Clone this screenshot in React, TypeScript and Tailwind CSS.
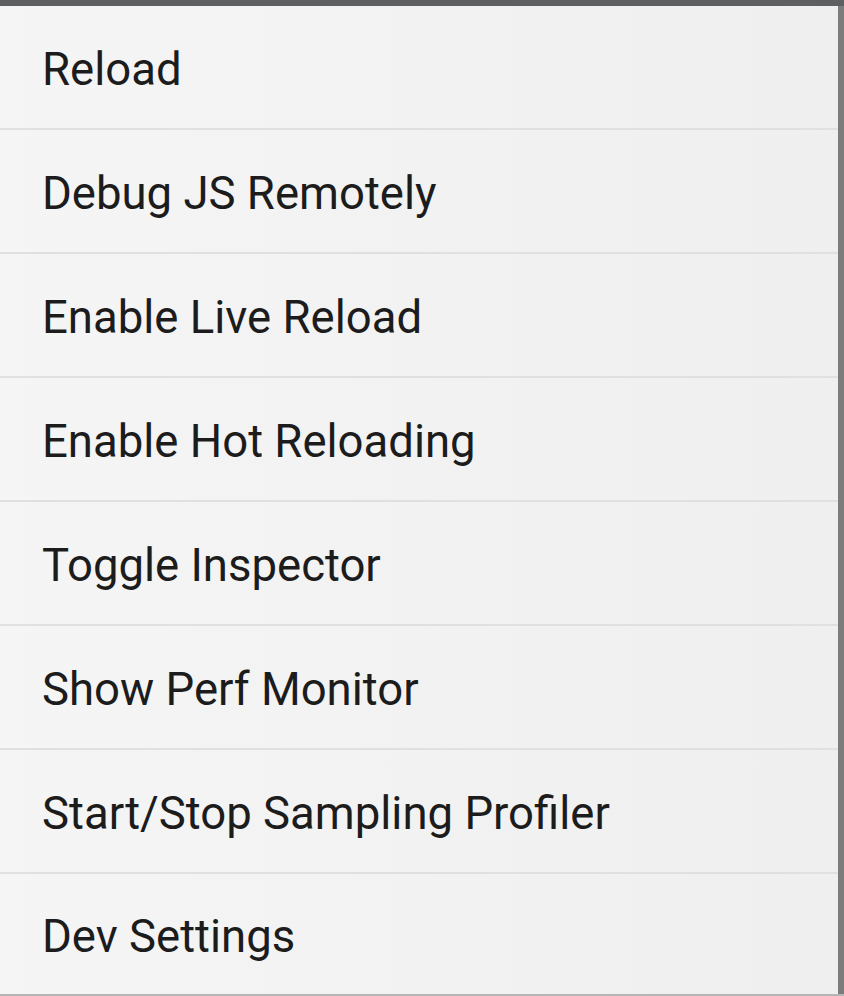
import React from "react";

const items = [
  "Reload",
  "Debug JS Remotely",
  "Enable Live Reload",
  "Enable Hot Reloading",
  "Toggle Inspector",
  "Show Perf Monitor",
  "Start/Stop Sampling Profiler",
  "Dev Settings",
];

export default function App() {
  return (
    <div className="w-[844px] h-[996px] bg-[#7c7c7c] flex flex-col overflow-hidden">
      <div className="h-[6px] bg-[#5d5f61]" />
      <div className="flex flex-row">
        <div className="w-[838px] bg-gradient-to-r from-[#f5f5f5] to-[#efefef] flex flex-col">
          {items.map((item, idx) => {
            const last = idx === items.length - 1;
            return (
              <div
                key={idx}
                className={`flex items-center pl-[42px] ${
                  last ? "h-[120px]" : "h-[124px] border-b-2 border-[#e0e0e0]"
                }`}
              >
                <p className="font-['Roboto',sans-serif] text-[45.5px] leading-none text-[#1c1c1c] pt-[6px]">
                  {item}
                </p>
              </div>
            );
          })}
        </div>
      </div>
      <div className="h-[2px] bg-[#b5b5b5]" />
    </div>
  );
}
